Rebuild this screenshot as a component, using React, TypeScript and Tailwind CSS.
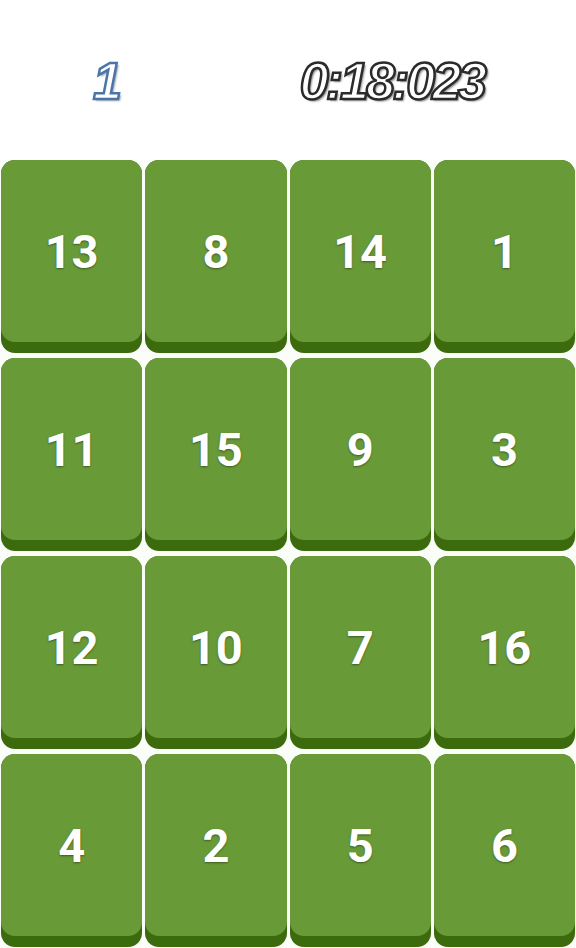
const tiles = [13, 8, 14, 1, 11, 15, 9, 3, 12, 10, 7, 16, 4, 2, 5, 6];

const Tile: React.FC<{ n: number }> = ({ n }) => (
  <div className="h-[193px] rounded-[14px] bg-[#3c6b0e] pb-[11px]">
    <div className="flex h-full items-center justify-center rounded-[14px] bg-[#699a38]">
      <span className="font-['Roboto',sans-serif] text-[47px] font-bold leading-none text-white [text-shadow:0_1px_2px_rgba(30,50,10,0.6)]">
        {n}
      </span>
    </div>
  </div>
);

export default function App() {
  return (
    <div className="h-[948px] w-[576px] overflow-hidden bg-[#fbfdf9]">
      <div className="flex h-[160px] items-center bg-white pt-[2px]">
        <span className="ml-[93px] font-['Liberation_Sans',sans-serif] text-[52px] font-bold italic leading-none text-white [-webkit-text-stroke:2.5px_#4d74a8] [text-shadow:2px_2px_2px_rgba(60,80,110,0.5)]">
          1
        </span>
        <span className="ml-auto mr-[92px] font-['Liberation_Sans',sans-serif] text-[52px] font-bold italic leading-none tracking-[-3px] text-white [-webkit-text-stroke:2.5px_#2b2b2b] [text-shadow:2px_2px_2px_rgba(0,0,0,0.45)]">
          0:18:023
        </span>
      </div>
      <div className="grid grid-cols-4 gap-x-[3px] gap-y-[5px] px-[1px]">
        {tiles.map((n) => (
          <Tile key={n} n={n} />
        ))}
      </div>
    </div>
  );
}
